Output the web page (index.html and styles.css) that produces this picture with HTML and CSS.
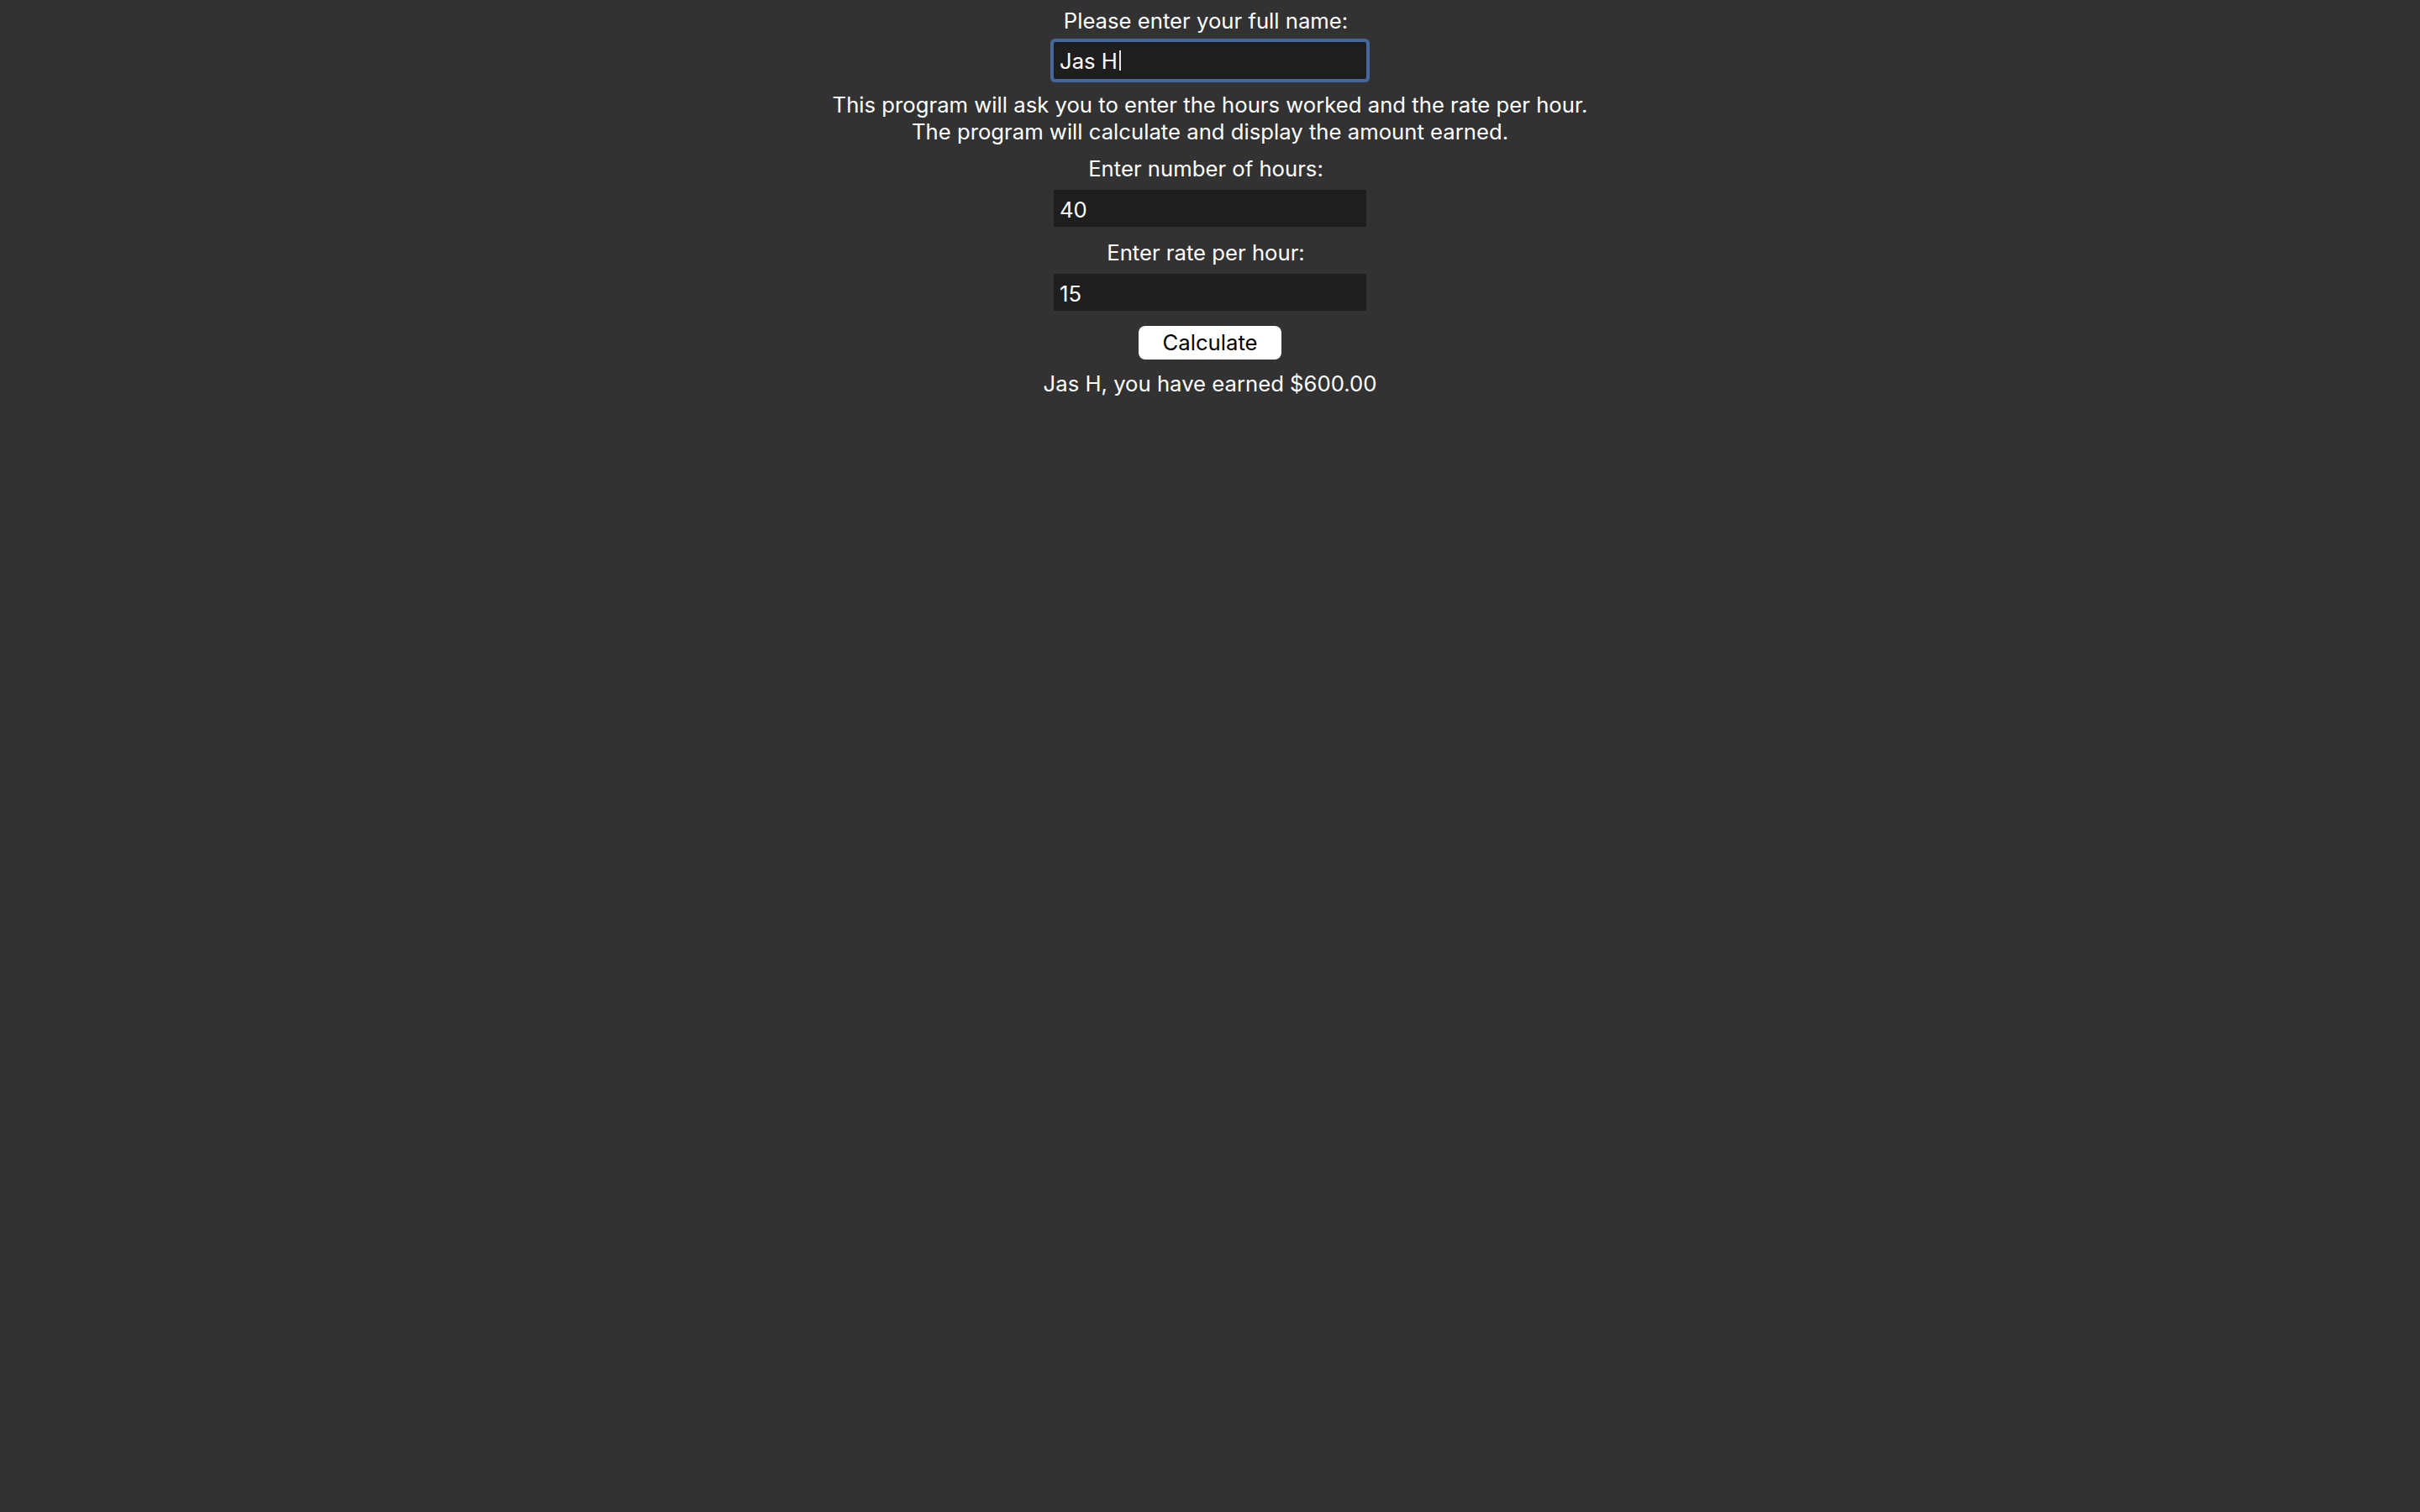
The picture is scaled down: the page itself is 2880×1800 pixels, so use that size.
FILE: index.html
```html
<!DOCTYPE html>
<html lang="en">
<head>
<meta charset="utf-8">
<title>Pay Calculator</title>
<link rel="stylesheet" href="styles.css">
</head>
<body>
<main class="form">
  <label class="label" for="name">Please enter your full name:</label>
  <div class="field field-focused" id="name" role="textbox"><span class="field-text">Jas H</span><span class="caret"></span></div>
  <p class="intro">This program will ask you to enter the hours worked and the rate per hour.<br>The program will calculate and display the amount earned.</p>
  <label class="label label-gap" for="hours">Enter number of hours:</label>
  <input class="field" id="hours" type="text" value="40">
  <label class="label label-gap-lg" for="rate">Enter rate per hour:</label>
  <input class="field" id="rate" type="text" value="15">
  <button class="btn" type="button">Calculate</button>
  <p class="result">Jas H, you have earned $600.00</p>
</main>
</body>
</html>
```
FILE: styles.css
```css
html, body {
  margin: 0;
  padding: 0;
  background: #323232;
}
body {
  color: #ffffff;
  font-family: Inter, "Liberation Sans", sans-serif;
  font-size: 25.7px;
  line-height: 32px;
  min-height: 1800px;
}
.form {
  display: flex;
  flex-direction: column;
  align-items: center;
  padding-top: 8px;
  text-align: center;
}
.label {
  display: block;
  padding: 1px 10px 0 0;
}
.label-gap {
  margin-top: 11px;
}
.label-gap-lg {
  margin-top: 14px;
}
.field {
  box-sizing: border-box;
  width: 372px;
  height: 44px;
  margin-top: 9px;
  padding: 2px 7px 0;
  border: none;
  border-radius: 1px;
  background: #1e1e1e;
  color: #ffffff;
  font-family: inherit;
  font-size: 25.7px;
  line-height: 42px;
  text-align: left;
  outline: none;
}
.field-focused {
  display: flex;
  align-items: center;
  box-shadow: 0 0 0 4px #46679a;
  border-radius: 2px;
}
.field-text {
  white-space: pre;
}
.caret {
  display: inline-block;
  width: 2px;
  height: 24px;
  margin: -2px 0 0 2px;
  background: #e8e8e8;
}
.intro {
  margin: 14px 0 0;
  padding-top: 1px;
}
.btn {
  box-sizing: border-box;
  width: 170px;
  height: 40px;
  margin-top: 18px;
  padding: 0;
  border: none;
  border-radius: 8px;
  background: #ffffff;
  color: #000000;
  font-family: inherit;
  font-size: 25.7px;
  line-height: 40px;
}
.result {
  margin: 12px 0 0;
  padding-top: 1px;
}
```
